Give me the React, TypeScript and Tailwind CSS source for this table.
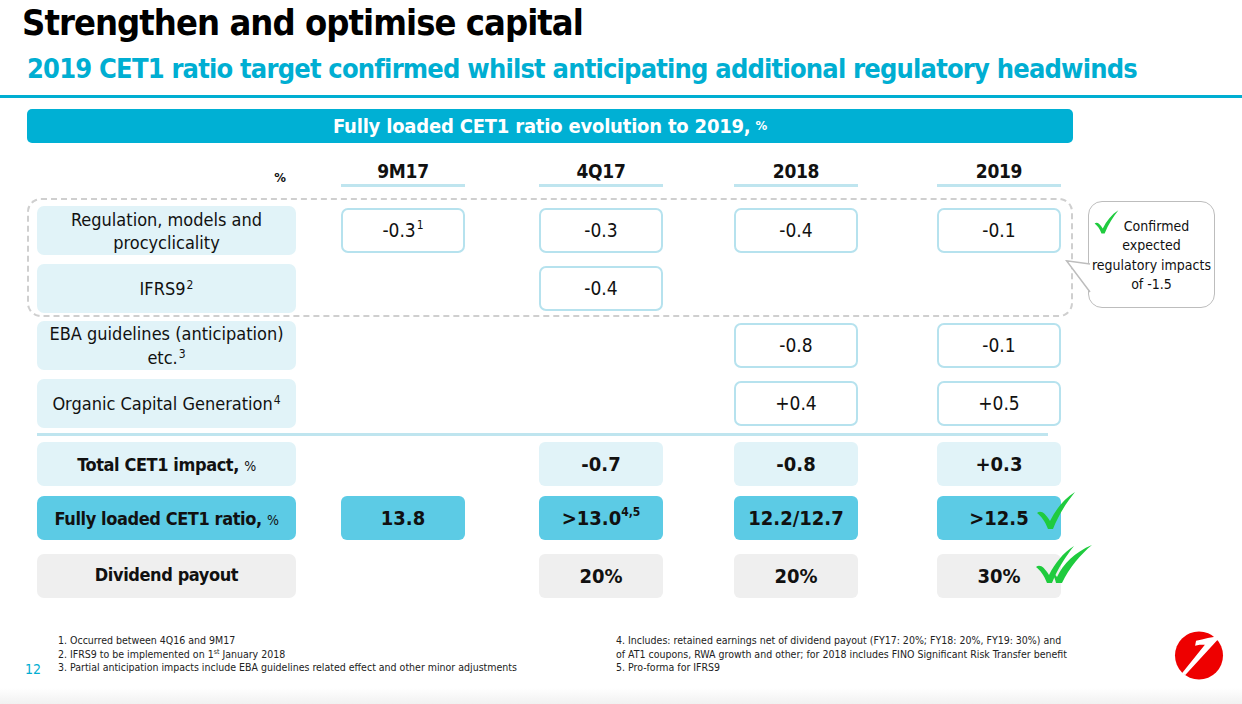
import React from 'react';

const CYAN = '#00b0d4';

const offsets = ['ml-[45px]', 'ml-[74px]', 'ml-[71px]', 'ml-[79px]'];

type Kind = 'outline' | 'light' | 'strong' | 'grey';

interface Cell {
  v: React.ReactNode;
  kind: Kind;
  extra?: React.ReactNode;
}

const boxClass: Record<Kind, string> = {
  outline: 'h-[45px] rounded-[7px] border-2 border-[#b6e2ee] bg-white text-[19px] text-[#111]',
  light: 'h-[44px] rounded-[6px] bg-[#e1f3f8] text-[20px] font-bold text-[#111]',
  strong: 'h-[44px] rounded-[6px] bg-[#5ccbe5] text-[20px] font-bold text-[#111]',
  grey: 'h-[44px] rounded-[6px] bg-[#efefef] text-[20px] font-bold text-[#111]',
};

const Check: React.FC<{ className?: string }> = ({ className }) => (
  <svg viewBox="0 0 40 40" className={className}>
    <path
      d="M1 23 C5 20 9 23 14 31 C20 19 28 9 39 2 C31 12 23 24 17 39 L12 39 C9 31 5 26 1 23 Z"
      fill="#1fcb3e"
    />
  </svg>
);

const DoubleCheck: React.FC<{ className?: string }> = ({ className }) => (
  <svg viewBox="0 0 58 40" className={className}>
    <path
      d="M1 23 C5 20 9 23 14 31 C20 19 28 9 39 2 C31 12 23 24 17 39 L12 39 C9 31 5 26 1 23 Z"
      fill="#1fcb3e"
    />
    <path
      d="M17 30 C19 30 21 31 22 33 C28 20 40 8 57 1 C46 10 34 24 27 39 L21 39 C20 35 19 32 17 30 Z"
      fill="#1fcb3e"
    />
  </svg>
);

const Row: React.FC<{
  label: React.ReactNode;
  labelClass: string;
  cells: (Cell | null)[];
  className?: string;
}> = ({ label, labelClass, cells, className = '' }) => (
  <div className={`flex items-center ${className}`}>
    <div className={`w-[259px] flex flex-col items-center justify-center text-center rounded-[7px] ${labelClass}`}>
      {label}
    </div>
    {cells.map((c, i) => (
      <div key={i} className={`relative w-[124px] ${offsets[i]}`}>
        {c && (
          <div className={`flex items-center justify-center ${boxClass[c.kind]}`}>{c.v}</div>
        )}
        {c?.extra}
      </div>
    ))}
  </div>
);

const sup = (t: string) => <sup className="text-[12px] ml-[1px]">{t}</sup>;

export default function App() {
  return (
    <div className="relative w-[1242px] h-[704px] overflow-hidden bg-white flex flex-col font-['Liberation_Sans_Narrow','DejaVu_Sans_Condensed','Liberation_Sans',sans-serif] text-[#111]">
      {/* headings */}
      <h1 className="pl-[22px] h-[46px] leading-[46px] text-[36px] font-bold text-black tracking-[-0.95px] whitespace-nowrap">
        Strengthen and optimise capital
      </h1>
      <h2 className="pl-[27px] h-[46px] leading-[46px] text-[27px] font-bold text-[#00aed2] tracking-[-0.8px] whitespace-nowrap">
        2019 CET1 ratio target confirmed whilst anticipating additional regulatory headwinds
      </h2>
      <div className="mt-[3px] h-[3px] bg-[#00aed2]" />

      {/* banner */}
      <div className="mt-[11px] ml-[27px] w-[1046px] h-[34px] rounded-[5px] flex items-center justify-center text-white font-bold text-[20px] tracking-[-0.2px]" style={{ backgroundColor: CYAN }}>
        Fully loaded CET1 ratio evolution to 2019,<span className="ml-[5px] text-[13px]">%</span>
      </div>

      {/* column headers */}
      <div className="mt-[15px] ml-[37px] flex items-end">
        <div className="w-[259px] flex justify-end pr-[10px] text-[13px] font-bold">%</div>
        {['9M17', '4Q17', '2018', '2019'].map((h, i) => (
          <div key={h} className={`w-[124px] ${offsets[i]} flex flex-col items-center`}>
            <div className="h-[26px] leading-[26px] text-[19px] font-bold tracking-[-0.3px]">{h}</div>
            <div className="w-full h-[3px] bg-[#bfe5ef]" />
          </div>
        ))}
      </div>

      {/* dashed regulatory group */}
      <div className="relative mt-[11px] ml-[27px] w-[1046px] border-2 border-dashed border-[#cfcfcf] rounded-[14px] pl-[8px] pt-[6px] pb-[2px] flex flex-col gap-[9px]">
        <Row
          labelClass="h-[49px] bg-[#e1f3f8] text-[18px] leading-[23px]"
          label={<>Regulation, models and<br />procyclicality</>}
          cells={[
            { v: <>-0.3{sup('1')}</>, kind: 'outline' },
            { v: '-0.3', kind: 'outline' },
            { v: '-0.4', kind: 'outline' },
            { v: '-0.1', kind: 'outline' },
          ]}
        />
        <Row
          labelClass="h-[49px] bg-[#e1f3f8] text-[18px]"
          label={<span>IFRS9{sup('2')}</span>}
          cells={[null, { v: '-0.4', kind: 'outline' }, null, null]}
        />

        {/* callout */}
        <div className="absolute left-[1059px] top-[1px] w-[127px] h-[107px] rounded-[14px] border-[1.5px] border-[#bdbdbd] bg-white flex flex-col items-center justify-center text-[14px] leading-[19.5px] text-[#111] pt-[2px]">
          <svg viewBox="0 0 26 34" className="absolute left-[-24px] top-[58px] w-[26px] h-[34px]">
            <path d="M25 4 L1.5 0.8 L25 32" fill="white" stroke="#bdbdbd" strokeWidth="1.5" />
          </svg>
          <Check className="absolute left-[4px] top-[7px] w-[27px] h-[25px]" />
          <span className="pl-[10px]">Confirmed</span>
          <span>expected</span>
          <span>regulatory impacts</span>
          <span>of -1.5</span>
        </div>
      </div>

      {/* remaining impact rows */}
      <div className="mt-[4px] ml-[37px] flex flex-col gap-[9px]">
        <Row
          labelClass="h-[49px] bg-[#e1f3f8] text-[18px] leading-[24px]"
          label={<><span>EBA guidelines (anticipation)</span><span>etc.{sup('3')}</span></>}
          cells={[null, null, { v: '-0.8', kind: 'outline' }, { v: '-0.1', kind: 'outline' }]}
        />
        <Row
          labelClass="h-[49px] bg-[#e1f3f8] text-[18px]"
          label={<span>Organic Capital Generation{sup('4')}</span>}
          cells={[null, null, { v: '+0.4', kind: 'outline' }, { v: '+0.5', kind: 'outline' }]}
        />
      </div>

      <div className="mt-[5px] ml-[37px] w-[1011px] h-[3px] bg-[#bfe5ef]" />

      {/* totals */}
      <div className="mt-[6px] ml-[37px] flex flex-col">
        <Row
          labelClass="h-[44px] bg-[#e1f3f8] text-[18px] font-bold tracking-[-0.4px]"
          label={<span>Total CET1 impact, <span className="text-[14px] font-normal">%</span></span>}
          cells={[null, { v: '-0.7', kind: 'light' }, { v: '-0.8', kind: 'light' }, { v: '+0.3', kind: 'light' }]}
        />
        <Row
          className="mt-[10px]"
          labelClass="h-[44px] bg-[#5ccbe5] text-[18px] font-bold tracking-[-0.4px]"
          label={<span>Fully loaded CET1 ratio, <span className="text-[14px] font-normal">%</span></span>}
          cells={[
            { v: '13.8', kind: 'strong' },
            { v: <>&gt;13.0<sup className="text-[12px]">4,5</sup></>, kind: 'strong' },
            { v: '12.2/12.7', kind: 'strong' },
            {
              v: '>12.5',
              kind: 'strong',
              extra: <Check className="absolute left-[99px] top-[-6px] w-[40px] h-[40px]" />,
            },
          ]}
        />
        <Row
          className="mt-[14px]"
          labelClass="h-[44px] bg-[#efefef] text-[18px] font-bold tracking-[-0.4px] pb-[4px]"
          label="Dividend payout"
          cells={[
            null,
            { v: '20%', kind: 'grey' },
            { v: '20%', kind: 'grey' },
            {
              v: '30%',
              kind: 'grey',
              extra: <DoubleCheck className="absolute left-[98px] top-[-10px] w-[58px] h-[40px]" />,
            },
          ]}
        />
      </div>

      {/* footnotes */}
      <div className="mt-[36px] flex items-start text-[10.5px] leading-[13.5px] text-[#222]">
        <div className="w-[58px] pl-[25px] pt-[28px]">
          <span className="block text-[14px] leading-[14px] text-[#00aed2]">12</span>
        </div>
        <div className="w-[558px]">
          <p>1. Occurred between 4Q16 and 9M17</p>
          <p>2. IFRS9 to be implemented on 1<sup className="text-[7px]">st</sup> January 2018</p>
          <p>3. Partial anticipation impacts include EBA guidelines related effect and other minor adjustments</p>
        </div>
        <div className="w-[558px]">
          <p>4. Includes: retained earnings net of dividend payout (FY17: 20%; FY18: 20%, FY19: 30%) and</p>
          <p>of AT1 coupons, RWA growth and other; for 2018 includes FINO Significant Risk Transfer benefit</p>
          <p>5. Pro-forma for IFRS9</p>
        </div>
        <svg viewBox="0 0 50 50" className="mt-[-3px] w-[50px] h-[49px]">
          <circle cx="25" cy="25" r="24.5" fill="#ee0000" />
          <path d="M22 10 C30 8 38 6 46 5 L44 9 L11 45 L7 44 L31 14 C27 14 24 14 21 15 Z" fill="white" />
        </svg>
      </div>

      <div className="mt-auto h-[16px] bg-gradient-to-b from-white to-[#f1f1f1]" />
    </div>
  );
}
